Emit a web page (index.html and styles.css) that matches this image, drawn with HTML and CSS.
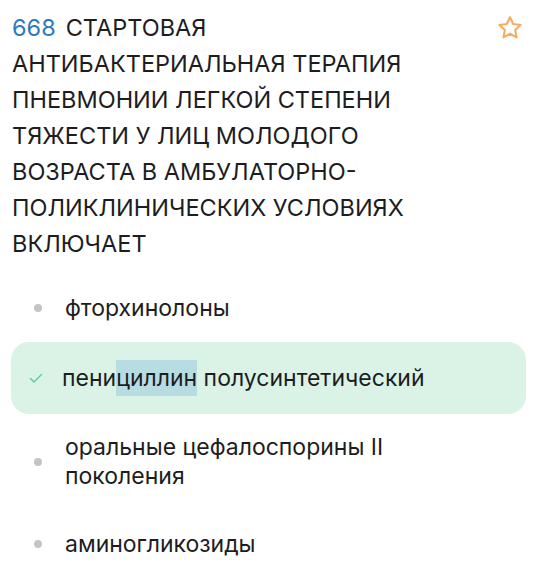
FILE: index.html
```html
<!DOCTYPE html>
<html lang="ru">
<head>
  <meta charset="UTF-8">
  <meta name="viewport" content="width=device-width, initial-scale=1">
  <title>Вопрос 668</title>
  <link rel="stylesheet" href="styles.css">
</head>
<body>
  <div class="question">
    <!-- Заголовок вопроса с номером и звездой избранного -->
    <div class="question-head">
      <h1 class="question-title"><span class="question-num">668</span><span class="question-text">СТАРТОВАЯ АНТИБАКТЕРИАЛЬНАЯ ТЕРАПИЯ ПНЕВМОНИИ ЛЕГКОЙ СТЕПЕНИ ТЯЖЕСТИ У ЛИЦ МОЛОДОГО ВОЗРАСТА В АМБУЛАТОРНО-ПОЛИКЛИНИЧЕСКИХ УСЛОВИЯХ ВКЛЮЧАЕТ</span></h1>
      <button class="fav-btn" aria-label="В избранное">
        <svg width="28" height="28" viewBox="0 0 24 24" fill="none" stroke="#f6ac5e" stroke-width="1.8" stroke-linejoin="round">
          <path d="M12 2.8l2.75 5.8 6.3.8-4.63 4.37 1.18 6.25L12 16.95 6.4 20.02l1.18-6.25L2.95 9.4l6.3-.8z"/>
        </svg>
      </button>
    </div>

    <!-- Варианты ответа -->
    <ul class="answers">
      <li class="answer"><span class="marker dot"></span><span class="answer-text">фторхинолоны</span></li>
      <li class="answer correct">
        <span class="marker check">
          <svg width="16" height="16" viewBox="0 0 16 16" fill="none" stroke="#5fcf9b" stroke-width="1.5" stroke-linecap="round" stroke-linejoin="round"><path d="M2.5 8.5l3.5 3.5 7.5-7.5"/></svg>
        </span>
        <span class="answer-text">пени<mark class="sel">циллин</mark> полусинтетический</span>
      </li>
      <li class="answer"><span class="marker dot"></span><span class="answer-text">оральные цефалоспорины II поколения</span></li>
      <li class="answer"><span class="marker dot"></span><span class="answer-text">аминогликозиды</span></li>
    </ul>
  </div>
</body>
</html>
```

FILE: styles.css
```css
body {
  margin: 0;
  background: #ffffff;
  font-family: Inter, "Noto Sans", sans-serif;
  color: #1d1d1f;
}
.question {
  padding: 10px 10px 0 12px;
}
.question-head {
  display: flex;
  align-items: flex-start;
  justify-content: space-between;
}
.question-title {
  margin: 0;
  max-width: 420px;
  font-size: 23.5px;
  font-weight: 400;
  line-height: 36px;
  letter-spacing: 0;
}
.question-num {
  color: #2b7bbd;
  margin-right: 10px;
}
.fav-btn {
  border: none;
  background: none;
  padding: 0;
  margin: 4px 2px 0 0;
  cursor: pointer;
  display: flex;
}
/* список ответов */
.answers {
  list-style: none;
  margin: 12px 0 0 -1px;
  padding: 0;
}
.answer {
  display: flex;
  align-items: center;
  min-height: 68px;
  padding: 0 12px;
  font-size: 23px;
  line-height: 29px;
  border-radius: 18px;
}
.answer.correct {
  background: #daf3e6;
  min-height: 72px;
}
.marker {
  flex: 0 0 auto;
  width: 30px;
  display: flex;
  align-items: center;
  justify-content: center;
  margin-right: 12px;
}
.marker.dot::before {
  content: "";
  width: 8px;
  height: 8px;
  border-radius: 50%;
  background: #c4c4c6;
}
.correct .marker {
  margin-left: -2px;
  margin-right: 11px;
}
.answer-text {
  max-width: 400px;
  padding: 19px 0;
}
.sel {
  background: #b7dde2;
  color: inherit;
  padding: 4px 0;
}
```
